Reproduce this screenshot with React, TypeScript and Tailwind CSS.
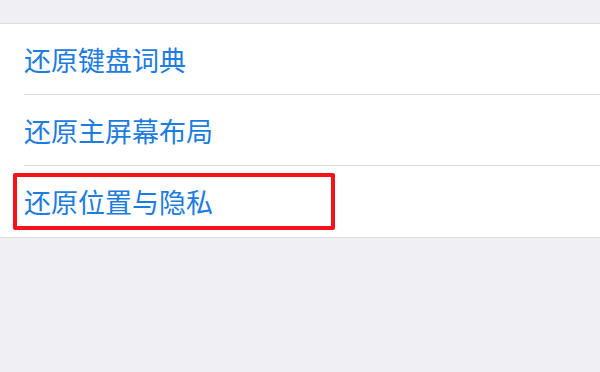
import React from "react";

const rows = ["还原键盘词典", "还原主屏幕布局", "还原位置与隐私"];

export default function App() {
  return (
    <div
      className="w-[600px] h-[372px] bg-[#efeff4] pt-[23px] overflow-hidden"
      style={{ fontFamily: '"Noto Sans CJK SC", "Liberation Sans", sans-serif' }}
    >
      <div className="bg-white border-y border-[#dcdce0]">
        {rows.map((label, i) => (
          <div key={label} className="pl-[24px]">
            <div
              className={`relative h-[71px] flex items-center ${
                i < rows.length - 1 ? "border-b border-[#dcdce0]" : ""
              }`}
            >
              <span className="text-[27px] leading-none text-[#1d7ce0]">{label}</span>
              {i === rows.length - 1 && (
                <div className="absolute left-[-11px] top-[7px] w-[322px] h-[57px] border-[4px] border-[#f5121a] rounded-[2px]" />
              )}
            </div>
          </div>
        ))}
      </div>
    </div>
  );
}
